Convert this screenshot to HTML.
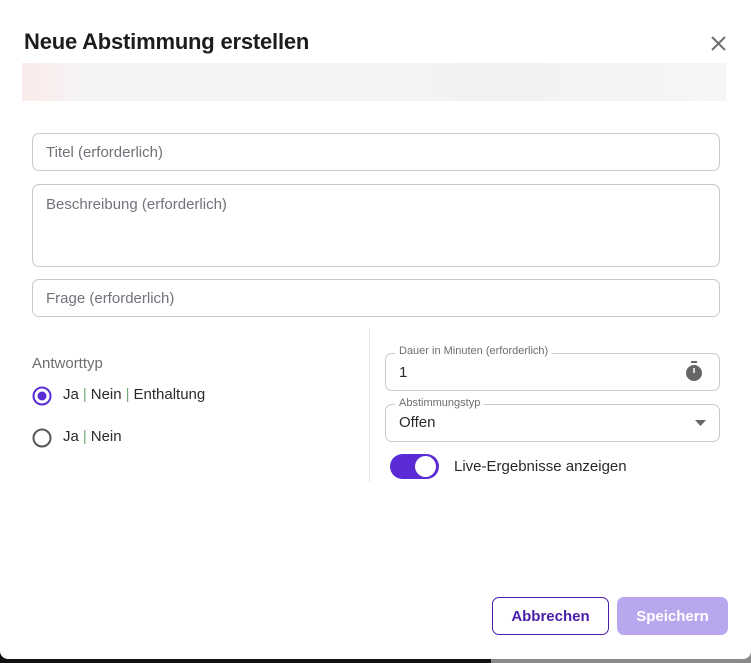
<!DOCTYPE html>
<html><head><meta charset="utf-8"><style>
*{box-sizing:border-box;margin:0;padding:0}
body{width:751px;height:663px;position:relative;overflow:hidden;background:#111;font-family:"Liberation Sans",sans-serif}
.bg2{position:absolute;left:491px;top:640px;width:260px;height:23px;background:#8a8a8a}
.dlg{position:absolute;left:0;top:0;width:751px;height:659px;background:#fff;border-radius:0 0 8px 8px}
.a{position:absolute}
h1{position:absolute;left:24px;top:29px;font-size:22px;font-weight:bold;color:#1d1d1f;letter-spacing:-0.2px}
.bar{left:22px;top:63px;width:704px;height:38px;background:linear-gradient(90deg,#fbeaea 0%,#f6f3f3 8%,#f4f4f4 40%,#f2f2f2 70%,#f6f6f6 100%)}
.inp{border:1px solid #c9c9cc;border-radius:7px;color:#70737a;font-size:15px;padding:11px 13px}
.lbl{font-size:11px;color:#6d6d72;background:#fff;padding:0 4px}
.txt{font-size:15px;color:#2a2a2e}
.sep{color:#7a7;margin:0 4px}
.btn{border-radius:7px;font-size:15px;font-weight:bold;text-align:center;line-height:38px;height:38px}
</style></head><body>
<div class="bg2"></div>
<div class="dlg">
<h1>Neue Abstimmung erstellen</h1>
<svg class="a" style="left:710px;top:35px" width="17" height="17" viewBox="0 0 17 17"><path d="M2 2L15 15M15 2L2 15" stroke="#6e6e73" stroke-width="2"/></svg>
<div class="a bar"></div>
<div class="a inp" style="left:32px;top:133px;width:688px;height:38px;padding-top:10px">Titel (erforderlich)</div>
<div class="a inp" style="left:32px;top:184px;width:688px;height:83px">Beschreibung (erforderlich)</div>
<div class="a inp" style="left:32px;top:279px;width:688px;height:38px;padding-top:10px">Frage (erforderlich)</div>
<div class="a" style="left:369px;top:328px;width:1px;height:154px;background:#e6e6e8"></div>
<div class="a" style="left:32px;top:355px;font-size:15px;color:#6d6d72">Antworttyp</div>
<svg class="a" style="left:32px;top:386px" width="20" height="20"><circle cx="10" cy="10" r="8.5" fill="none" stroke="#5b2bd6" stroke-width="2"/><circle cx="10" cy="10" r="4.5" fill="#5b2bd6"/></svg>
<div class="a txt" style="left:63px;top:386px">Ja<span class="sep">|</span>Nein<span class="sep">|</span>Enthaltung</div>
<svg class="a" style="left:32px;top:428px" width="20" height="20"><circle cx="10" cy="10" r="8.5" fill="none" stroke="#55555c" stroke-width="2"/></svg>
<div class="a txt" style="left:63px;top:428px">Ja<span class="sep">|</span>Nein</div>
<div class="a" style="left:385px;top:353px;width:335px;height:38px;border:1px solid #c9c9cc;border-radius:7px"></div>
<div class="a lbl" style="left:395px;top:345px">Dauer in Minuten (erforderlich)</div>
<div class="a txt" style="left:399px;top:364px">1</div>
<svg class="a" style="left:684px;top:361px" width="20" height="22" viewBox="0 0 20 22"><rect x="7" y="0" width="6" height="2" fill="#666"/><circle cx="10" cy="12" r="8" fill="#666"/><path d="M10 12V7" stroke="#fff" stroke-width="1.5"/></svg>
<div class="a" style="left:385px;top:404px;width:335px;height:38px;border:1px solid #c9c9cc;border-radius:7px"></div>
<div class="a lbl" style="left:395px;top:397px">Abstimmungstyp</div>
<div class="a txt" style="left:399px;top:414px">Offen</div>
<svg class="a" style="left:695px;top:420px" width="11" height="6"><path d="M0 0H11L5.5 6Z" fill="#666"/></svg>
<div class="a" style="left:390px;top:454px;width:49px;height:25px;border-radius:13px;background:#5b2bd6"></div>
<div class="a" style="left:415px;top:456px;width:21px;height:21px;border-radius:50%;background:#fff"></div>
<div class="a txt" style="left:454px;top:458px">Live-Ergebnisse anzeigen</div>
<div class="a btn" style="left:492px;top:597px;width:117px;border:1px solid #4a1fa8;color:#4a1fa8;line-height:38px">Abbrechen</div>
<div class="a btn" style="left:617px;top:597px;width:111px;background:#b9a7ee;color:#fff;line-height:39px">Speichern</div>
</div>
</body></html>
